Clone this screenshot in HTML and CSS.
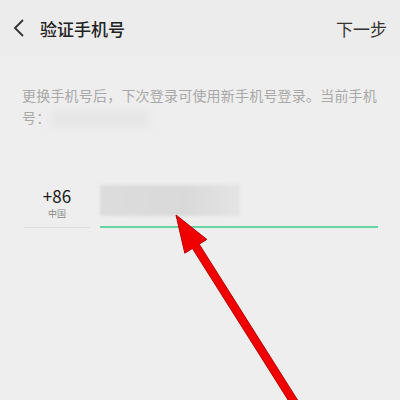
FILE: index.html
```html
<!DOCTYPE html>
<html lang="zh-CN">
<head>
    <meta charset="UTF-8">
    <meta name="viewport" content="width=device-width, initial-scale=1.0">
    <title>验证手机号</title>
    <link rel="stylesheet" href="styles.css">
</head>
<body>
    <!-- Top bar -->
    <div class="top-bar">
        <div class="top-left">
            <svg class="back-icon" width="12" height="20" viewBox="0 0 12 20">
                <polyline points="10,2 2,10 10,18" fill="none" stroke="#333" stroke-width="1.8"/>
            </svg>
            <span class="top-title">验证手机号</span>
        </div>
        <span class="top-next">下一步</span>
    </div>

    <!-- Hint -->
    <div class="hint">
        更换手机号后，下次登录可使用新手机号登录。当前手机号：<span class="hint-blur"></span>
    </div>

    <!-- Phone input -->
    <div class="phone-row">
        <div class="country">
            <div class="country-code">+86</div>
            <div class="country-name">中国</div>
        </div>
        <div class="phone-field">
            <div class="phone-blur"></div>
            <div class="phone-line"></div>
        </div>
    </div>

    <!-- Annotation arrow -->
    <svg class="arrow" width="400" height="400" viewBox="0 0 400 400">
        <path d="M176,215 L206.8,239.4 L199.2,244.2 L299.4,402.9 L292.6,407.1 L192.4,248.4 L184.8,253.2 Z"
              fill="#f00000" stroke="#b80000" stroke-width="1" stroke-linejoin="round"/>
    </svg>
</body>
</html>
```

FILE: styles.css
```css
/* General */
body {
    margin: 0;
    padding: 0;
    background: #eeeeee;
    font-family: "Noto Sans CJK SC", "Noto Sans", sans-serif;
    color: #222;
    position: relative;
    height: 400px;
    overflow: hidden;
}

/* Top bar */
.top-bar {
    height: 56px;
    display: flex;
    align-items: center;
    justify-content: space-between;
    padding: 0 13px 0 13px;
    background: #ececec;
}

.top-left {
    display: flex;
    align-items: center;
}

.back-icon {
    display: block;
}

.top-title {
    margin-left: 15px;
    font-size: 17px;
    font-weight: 500;
    color: #222;
}

.top-next {
    font-size: 17px;
    color: #333;
}

/* Hint */
.hint {
    margin-top: 28px;
    padding: 0 22px;
    font-size: 14px;
    line-height: 22px;
    color: #a8a8a8;
    letter-spacing: 0.2px;
}

.hint-blur {
    display: inline-block;
    width: 100px;
    height: 18px;
    vertical-align: middle;
    background: #e7e7e7;
    filter: blur(3px);
}

/* Phone row */
.phone-row {
    display: flex;
    align-items: flex-start;
    margin-top: 57px;
    padding: 0 22px 0 24px;
    gap: 10px;
}

.country {
    width: 66px;
    text-align: center;
    border-bottom: 1px solid #dedede;
    padding-bottom: 6px;
}

.country-code {
    font-size: 17px;
    line-height: 22px;
    color: #1a1a1a;
}

.country-name {
    font-size: 9px;
    line-height: 14px;
    color: #888;
}

.phone-field {
    flex: 1;
}

.phone-blur {
    width: 140px;
    height: 31px;
    background: linear-gradient(90deg, #dcdcdc, #d9d9d9 60%, #e4e4e4);
    filter: blur(1.5px);
}

.phone-line {
    height: 1.5px;
    margin-top: 10px;
    background: #66d4a6;
}

/* Arrow overlay */
.arrow {
    position: absolute;
    left: 0;
    top: 0;
}
```
